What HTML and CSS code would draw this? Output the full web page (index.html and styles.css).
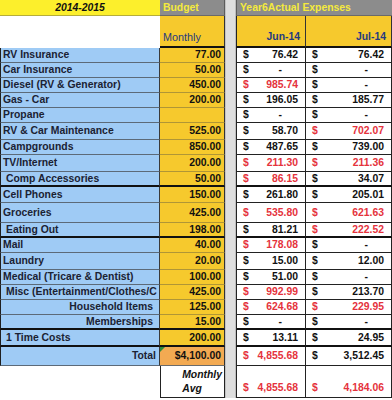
FILE: index.html
```html
<!DOCTYPE html>
<html>
<head>
<meta charset="utf-8">
<link rel="stylesheet" href="styles.css">
</head>
<body>
<div class="sheet">
  <div class="row h16">
    <div class="c hy">2014-2015</div>
    <div class="c hg">Budget</div>
    <div class="sp"></div>
    <div class="c hg span2">Year6Actual Expenses</div>
  </div>
  <div class="row h32 thick">
    <div class="c hw"></div>
    <div class="c bud-h">Monthly</div>
    <div class="sp"></div>
    <div class="c mon jun">Jun-14</div>
    <div class="c mon">Jul-14</div>
  </div>

  <div class="row">
    <div class="c lab">RV Insurance</div>
    <div class="c bud">77.00</div>
    <div class="sp"></div>
    <div class="c amt jun"><span>$</span><span>76.42</span></div>
    <div class="c amt"><span>$</span><span>76.42</span></div>
  </div>
  <div class="row">
    <div class="c lab">Car Insurance</div>
    <div class="c bud">50.00</div>
    <div class="sp"></div>
    <div class="c amt jun"><span>$</span><span class="dash">-</span></div>
    <div class="c amt"><span>$</span><span class="dash">-</span></div>
  </div>
  <div class="row">
    <div class="c lab">Diesel (RV &amp; Generator)</div>
    <div class="c bud">450.00</div>
    <div class="sp"></div>
    <div class="c amt jun r"><span>$</span><span>985.74</span></div>
    <div class="c amt"><span>$</span><span class="dash">-</span></div>
  </div>
  <div class="row">
    <div class="c lab">Gas - Car</div>
    <div class="c bud">200.00</div>
    <div class="sp"></div>
    <div class="c amt jun"><span>$</span><span>196.05</span></div>
    <div class="c amt"><span>$</span><span>185.77</span></div>
  </div>
  <div class="row">
    <div class="c lab">Propane</div>
    <div class="c bud"></div>
    <div class="sp"></div>
    <div class="c amt jun"><span>$</span><span class="dash">-</span></div>
    <div class="c amt"><span>$</span><span class="dash">-</span></div>
  </div>
  <div class="row h17">
    <div class="c lab">RV &amp; Car Maintenance</div>
    <div class="c bud">525.00</div>
    <div class="sp"></div>
    <div class="c amt jun"><span>$</span><span>58.70</span></div>
    <div class="c amt r"><span>$</span><span>702.07</span></div>
  </div>
  <div class="row">
    <div class="c lab">Campgrounds</div>
    <div class="c bud">850.00</div>
    <div class="sp"></div>
    <div class="c amt jun"><span>$</span><span>487.65</span></div>
    <div class="c amt"><span>$</span><span>739.00</span></div>
  </div>
  <div class="row h17">
    <div class="c lab">TV/Internet</div>
    <div class="c bud">200.00</div>
    <div class="sp"></div>
    <div class="c amt jun r"><span>$</span><span>211.30</span></div>
    <div class="c amt r"><span>$</span><span>211.36</span></div>
  </div>
  <div class="row thick">
    <div class="c lab ind">Comp Accessories</div>
    <div class="c bud">50.00</div>
    <div class="sp"></div>
    <div class="c amt jun r"><span>$</span><span>86.15</span></div>
    <div class="c amt"><span>$</span><span>34.07</span></div>
  </div>
  <div class="row h16">
    <div class="c lab">Cell Phones</div>
    <div class="c bud">150.00</div>
    <div class="sp"></div>
    <div class="c amt jun"><span>$</span><span>261.80</span></div>
    <div class="c amt"><span>$</span><span>205.01</span></div>
  </div>
  <div class="row h20">
    <div class="c lab">Groceries</div>
    <div class="c bud">425.00</div>
    <div class="sp"></div>
    <div class="c amt jun r"><span>$</span><span>535.80</span></div>
    <div class="c amt r"><span>$</span><span>621.63</span></div>
  </div>
  <div class="row thick">
    <div class="c lab ind">Eating Out</div>
    <div class="c bud">198.00</div>
    <div class="sp"></div>
    <div class="c amt jun"><span>$</span><span>81.21</span></div>
    <div class="c amt r"><span>$</span><span>222.52</span></div>
  </div>
  <div class="row">
    <div class="c lab">Mail</div>
    <div class="c bud">40.00</div>
    <div class="sp"></div>
    <div class="c amt jun r"><span>$</span><span>178.08</span></div>
    <div class="c amt"><span>$</span><span class="dash">-</span></div>
  </div>
  <div class="row h17">
    <div class="c lab">Laundry</div>
    <div class="c bud">20.00</div>
    <div class="sp"></div>
    <div class="c amt jun"><span>$</span><span>15.00</span></div>
    <div class="c amt"><span>$</span><span>12.00</span></div>
  </div>
  <div class="row">
    <div class="c lab">Medical (Tricare &amp; Dentist)</div>
    <div class="c bud">100.00</div>
    <div class="sp"></div>
    <div class="c amt jun"><span>$</span><span>51.00</span></div>
    <div class="c amt"><span>$</span><span class="dash">-</span></div>
  </div>
  <div class="row">
    <div class="c lab ind">Misc (Entertainment/Clothes/C</div>
    <div class="c bud">425.00</div>
    <div class="sp"></div>
    <div class="c amt jun r"><span>$</span><span>992.99</span></div>
    <div class="c amt"><span>$</span><span>213.70</span></div>
  </div>
  <div class="row">
    <div class="c lab rt">Household Items</div>
    <div class="c bud">125.00</div>
    <div class="sp"></div>
    <div class="c amt jun r"><span>$</span><span>624.68</span></div>
    <div class="c amt r"><span>$</span><span>229.95</span></div>
  </div>
  <div class="row thick">
    <div class="c lab rt">Memberships</div>
    <div class="c bud">15.00</div>
    <div class="sp"></div>
    <div class="c amt jun"><span>$</span><span class="dash">-</span></div>
    <div class="c amt"><span>$</span><span class="dash">-</span></div>
  </div>
  <div class="row h17 thick">
    <div class="c lab ind">1 Time Costs</div>
    <div class="c bud">200.00</div>
    <div class="sp"></div>
    <div class="c amt jun"><span>$</span><span>13.11</span></div>
    <div class="c amt"><span>$</span><span>24.95</span></div>
  </div>
  <div class="row h19">
    <div class="c lab rt tot">Total</div>
    <div class="c bud total">$4,100.00</div>
    <div class="sp"></div>
    <div class="c amt jun r"><span>$</span><span>4,855.68</span></div>
    <div class="c amt"><span>$</span><span>3,512.45</span></div>
  </div>
  <div class="row h32">
    <div class="c hw"></div>
    <div class="c avg">Monthly<br>Avg</div>
    <div class="sp"></div>
    <div class="c amt jun r low"><span>$</span><span>4,855.68</span></div>
    <div class="c amt r low"><span>$</span><span>4,184.06</span></div>
  </div>
</div>
</body>
</html>
```

FILE: styles.css
```css
* {
  box-sizing: border-box;
  margin: 0;
  padding: 0;
}

body {
  margin: 0;
  background: #ffffff;
  font-family: "Liberation Sans", Arial, sans-serif;
  font-weight: bold;
  font-size: 10.4px;
  color: #1b2233;
}

.sheet {
  width: 392px;
}

.row {
  display: grid;
  grid-template-columns: 160px 65px 11px 70px 86px;
  height: 15px;
}

.h16 { height: 16px; }
.h17 { height: 17px; }
.h19 { height: 19px; }
.h20 { height: 20px; }
.h32 { height: 32px; }

.c {
  display: flex;
  align-items: center;
  white-space: nowrap;
  overflow: hidden;
  line-height: 12px;
}

.hy {
  background: #fcef2c;
  justify-content: center;
  font-style: italic;
  color: #111111;
  border-bottom: 1px solid #b5ad3a;
}

.hg {
  background: #8c8c8c;
  color: #f4ea3c;
  padding-left: 3px;
  border-bottom: 1px solid #6a6a6a;
  border-right: 1px solid #5c5c5c;
}

.span2 {
  grid-column: span 2;
  border-left: 1px solid #5c5c5c;
  border-right: none;
}

.hw {
  background: #ffffff;
}

.bud-h {
  background: #f6c92d;
  color: #253a80;
  font-weight: normal;
  align-items: flex-end;
  padding: 0 0 3px 3px;
  border-right: 1px solid #333333;
  font-size: 10.8px;
}

.mon {
  background: #f6c92d;
  color: #253a80;
  align-items: flex-end;
  justify-content: flex-end;
  padding: 0 5px 3px 0;
  border-right: 1px solid #333333;
}

.sp {
  background: #dedede;
  border-left: 1px solid #c2c2c2;
  border-right: 1px solid #bdbdbd;
}

.lab {
  background: #9fcbf5;
  border-left: 1px solid #1f1f1f;
  border-right: 1px solid #3a3a3a;
  border-bottom: 1px solid #5c6a78;
  padding-left: 2px;
}

.ind {
  padding-left: 5px;
}

.rt {
  justify-content: flex-end;
  padding-right: 6px;
}

.tot {
  padding-right: 3px;
}

.bud {
  background: #f6c92d;
  justify-content: flex-end;
  padding-right: 3px;
  border-right: 1px solid #333333;
  border-bottom: 1px solid #b09636;
  color: #111111;
}

.total {
  background: #f3aa52;
  position: relative;
  border-bottom: 1px solid #6b6b6b;
}

.total::before {
  content: "";
  position: absolute;
  left: 0;
  top: 0;
  border-top: 5px solid #2f8a3a;
  border-right: 5px solid transparent;
}

.amt {
  background: #ffffff;
  justify-content: space-between;
  padding: 0 7px 0 6px;
  border-right: 1px solid #222222;
  border-bottom: 1px solid #222222;
  color: #111111;
}

.jun {
  border-left: 1px solid #222222;
}

.amt .dash {
  padding-right: 16px;
}

.r {
  color: #e5323c;
}

.thick .lab,
.thick .bud,
.thick .amt,
.thick .bud-h,
.thick .mon {
  border-bottom: 2px solid #111111;
}

.avg {
  background: #ffffff;
  flex-direction: column;
  align-items: flex-end;
  justify-content: center;
  font-style: italic;
  line-height: 14px;
  padding-right: 2px;
  border-left: 1px solid #222222;
  border-right: 1px solid #222222;
  border-bottom: 1px solid #222222;
  color: #111111;
}

.low {
  align-items: flex-end;
  padding-bottom: 3px;
}
```
